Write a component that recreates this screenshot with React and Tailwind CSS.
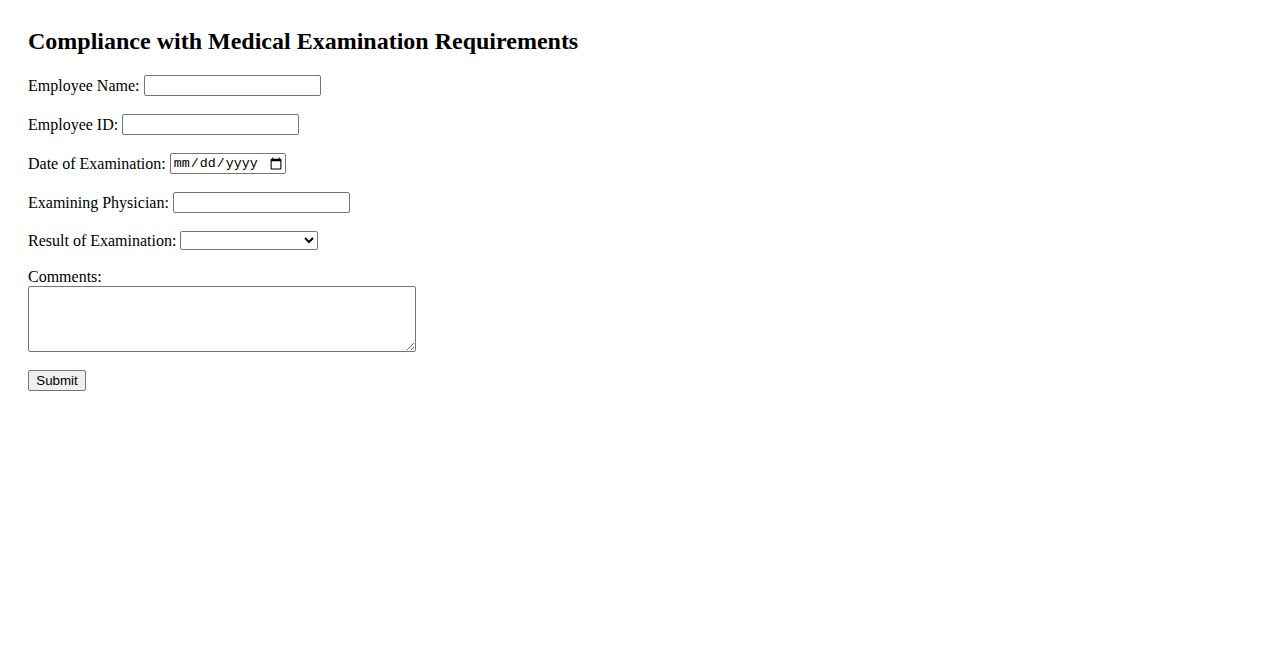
import React from "react";

const Field = ({ label, children }) => (
  <div className="flex items-center gap-[4px] h-[21px] mb-[18px]">
    <label>{label}</label>
    {children}
  </div>
);

const inputClass =
  "h-[21px] border border-[#767676] rounded-[2px] bg-white px-[2px] text-[13.33px] font-['Liberation_Sans',Arial,sans-serif]";

export default function App() {
  return (
    <div className="min-h-screen bg-white text-black font-['Liberation_Serif','Times_New_Roman',serif] text-[16px] px-[28px] pt-[28px]">
      <h2 className="text-[24px] font-bold leading-[27px] mb-[20px]">
        Compliance with Medical Examination Requirements
      </h2>
      <form onSubmit={(e) => e.preventDefault()}>
        <Field label="Employee Name:">
          <input type="text" className={`${inputClass} w-[177px]`} />
        </Field>
        <Field label="Employee ID:">
          <input type="text" className={`${inputClass} w-[177px]`} />
        </Field>
        <Field label="Date of Examination:">
          <input
            type="date"
            className="h-[21px] w-[116px] border border-[#767676] rounded-[2px] bg-white pl-[2px] text-[13.33px] font-['Liberation_Mono',monospace]"
          />
        </Field>
        <Field label="Examining Physician:">
          <input type="text" className={`${inputClass} w-[177px]`} />
        </Field>
        <div className="flex items-center gap-[4px] h-[19px] mb-[18px]">
          <label>Result of Examination:</label>
          <select className="h-[19px] w-[138px] border border-[#767676] rounded-[2px] bg-white text-[13.33px] font-['Liberation_Sans',Arial,sans-serif]">
            <option value=""></option>
            <option value="fit">Fit</option>
            <option value="unfit">Unfit</option>
          </select>
        </div>
        <label className="block leading-[18px]">Comments:</label>
        <textarea className="block w-[388px] h-[66px] border border-[#767676] rounded-[2px] bg-white mb-[18px]" />
        <button
          type="submit"
          className="block h-[21px] w-[58px] border border-[#767676] rounded-[2px] bg-[#efefef] text-[13.33px] font-['Liberation_Sans',Arial,sans-serif]"
        >
          Submit
        </button>
      </form>
    </div>
  );
}
